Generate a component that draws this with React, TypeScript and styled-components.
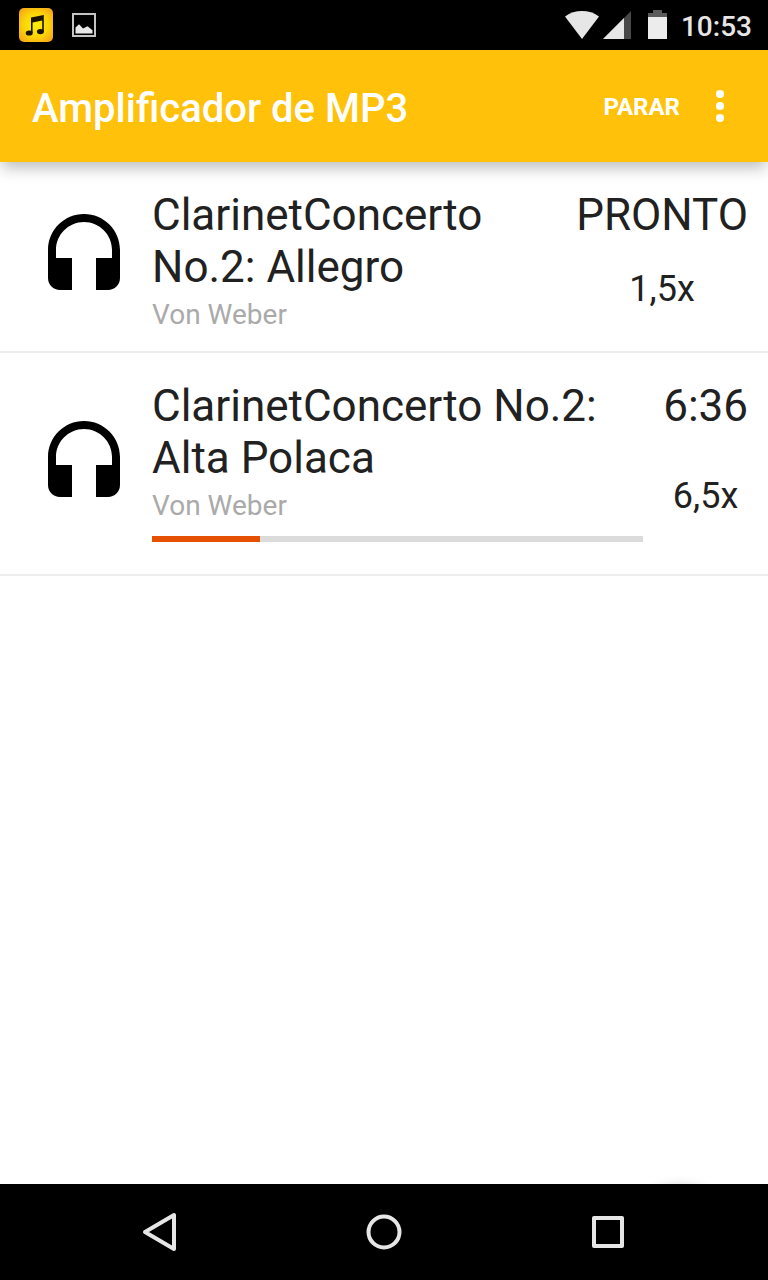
import React from 'react';
import styled, { createGlobalStyle } from 'styled-components';

const GlobalStyle = createGlobalStyle`
  *, *::before, *::after { box-sizing: border-box; }
  body {
    margin: 0;
    background: #fff;
    color: #212121;
    font-family: Roboto, "Liberation Sans", sans-serif;
  }
  h1, h2, p, ul { margin: 0; padding: 0; font-weight: 400; }
  button { border: 0; padding: 0; background: none; color: inherit; font: inherit; cursor: pointer; }
  svg { display: block; }
`;

const Screen = styled.div`
  display: flex;
  flex-direction: column;
  min-height: 100vh;
`;

const StatusBar = styled.div`
  display: flex;
  align-items: center;
  justify-content: space-between;
  height: 50px;
  padding: 0 16px 0 19px;
  background: #000;
  color: #e6e6e6;
`;

const StatusGroup = styled.div<{ $gap: number }>`
  display: flex;
  align-items: center;
  gap: ${(p) => p.$gap}px;
`;

const Clock = styled.time`
  padding-top: 4px;
  font-size: 28px;
  line-height: 32px;
  font-weight: 500;
`;

const AppBar = styled.header`
  position: relative;
  z-index: 1;
  display: flex;
  align-items: center;
  height: 112px;
  padding: 0 28px 0 32px;
  background: #ffc10a;
  color: #fff;
  box-shadow: 0 8px 14px -2px rgba(0, 0, 0, 0.26);
`;

const AppTitle = styled.h1`
  flex: 1;
  padding-top: 6px;
  font-size: 40px;
  line-height: 48px;
  font-weight: 500;
`;

const ActionButton = styled.button`
  padding-top: 2px;
  font-size: 24px;
  line-height: 48px;
  font-weight: 700;
`;

const MenuButton = styled.button`
  margin-left: 20px;
`;

const Content = styled.main`
  position: relative;
  flex: 1;
  overflow: hidden;
`;

const TrackList = styled.ul`
  list-style: none;
`;

const TrackRow = styled.li`
  display: flex;
  padding: 27px 20px 16px 36px;
  border-bottom: 2px solid #eee;
`;

const TrackIcon = styled.div`
  display: flex;
  align-items: center;
  margin-right: 20px;
  padding-bottom: 9px;
`;

const TrackInfo = styled.div`
  flex: 1;
  min-width: 0;
  margin-right: 20px;
  padding-bottom: 4px;
`;

const TrackTitle = styled.h2`
  font-size: 44px;
  line-height: 52px;
`;

const Artist = styled.p`
  margin-top: 6px;
  color: #aaa;
  font-size: 28px;
  line-height: 32px;
`;

const Progress = styled.progress`
  display: block;
  width: 100%;
  height: 6px;
  margin: 14px 0 12px;
  border: 0;
  appearance: none;
  background: #dbdbdb;
  &::-webkit-progress-bar { background: #dbdbdb; }
  &::-webkit-progress-value { background: #e65100; }
`;

const TrackStatus = styled.div`
  display: flex;
  flex-direction: column;
  align-items: center;
  font-size: 44px;
  line-height: 52px;
`;

const Gain = styled.div`
  display: flex;
  flex: 1;
  align-items: center;
  padding-top: 2px;
  font-size: 36px;
  line-height: 42px;
`;

const FloatingButton = styled.button`
  position: absolute;
  right: 32px;
  top: 100%;
  width: 112px;
  height: 112px;
  border-radius: 50%;
  box-shadow: 0 2px 12px rgba(0, 0, 0, 0.2);
`;

const NavBar = styled.nav`
  display: flex;
  height: 96px;
  padding: 0 48px;
  background: #000;
`;

const NavButton = styled.button`
  display: flex;
  flex: 1;
  align-items: center;
  justify-content: center;
`;

const MusicAppIcon = () => (
  <svg width="34" height="34" viewBox="0 0 34 34" aria-hidden="true">
    <defs>
      <radialGradient id="sun" r="0.7">
        <stop offset="0" stopColor="#fff000" />
        <stop offset="0.5" stopColor="#fbd606" />
        <stop offset="1" stopColor="#f59a1c" />
      </radialGradient>
    </defs>
    <rect width="34" height="34" rx="5" fill="url(#sun)" />
    <path d="M12 9.4 24.8 7v17h-1.6V12.4l-9.6 2V25H12z" fill="#1a1300" />
    <ellipse cx="10.2" cy="25" rx="3.5" ry="2.6" fill="#1a1300" />
    <ellipse cx="21.4" cy="23.6" rx="3.5" ry="2.6" fill="#1a1300" />
  </svg>
);

const PictureIcon = () => (
  <svg width="24" height="24" viewBox="0 0 24 24" aria-hidden="true">
    <rect x="1" y="1" width="22" height="22" fill="none" stroke="#c4c4c4" strokeWidth="2" />
    <path d="M3.5 20.5v-6L7 11.2l4 4.3 4.5-2.2 5 4v3.2z" fill="#e8e8e8" />
  </svg>
);

const WifiIcon = () => (
  <svg width="34" height="28" viewBox="0 0 34 28" aria-hidden="true">
    <path d="M0 5.5C10 -1.8 24 -1.8 34 5.5L17 28z" fill="#e6e6e6" />
  </svg>
);

const SignalIcon = () => (
  <svg width="28" height="28" viewBox="0 0 28 28" aria-hidden="true">
    <path d="M0 28 28 0v28z" fill="#484848" />
    <path d="M0 28 21 7v21z" fill="#e6e6e6" />
  </svg>
);

const BatteryIcon = () => (
  <svg width="19" height="30" viewBox="0 0 19 30" aria-hidden="true">
    <path d="M5 0h9v3h5v4H0V3h5z" fill="#5a5a5a" />
    <path d="M0 7h19v22H0z" fill="#ececec" />
  </svg>
);

const MoreIcon = () => (
  <svg width="40" height="48" viewBox="0 0 40 48" fill="#fff" aria-hidden="true">
    <circle cx="20" cy="12" r="4" />
    <circle cx="20" cy="24" r="4" />
    <circle cx="20" cy="36" r="4" />
  </svg>
);

const HeadsetIcon = () => (
  <svg width="96" height="96" viewBox="0 0 24 24" aria-hidden="true">
    <path d="M12 1c-4.97 0-9 4.03-9 9v7c0 1.66 1.34 3 3 3h3v-8H5v-2c0-3.87 3.13-7 7-7s7 3.13 7 7v2h-4v8h3c1.66 0 3-1.34 3-3v-7c0-4.97-4.03-9-9-9z" />
  </svg>
);

const navIcon = {
  width: 48,
  height: 48,
  viewBox: '0 0 48 48',
  fill: 'none',
  stroke: '#e6e6e6',
  strokeWidth: 4,
  strokeLinejoin: 'round' as const,
  'aria-hidden': true,
};

interface Track {
  title: string;
  artist: string;
  status: string;
  gain: string;
  progress?: number;
}

const tracks: Track[] = [
  { title: 'ClarinetConcerto No.2: Allegro', artist: 'Von Weber', status: 'PRONTO', gain: '1,5x' },
  { title: 'ClarinetConcerto No.2: Alta Polaca', artist: 'Von Weber', status: '6:36', gain: '6,5x', progress: 22 },
];

export default function App() {
  return (
    <Screen>
      <GlobalStyle />
      <StatusBar>
        <StatusGroup $gap={19}>
          <MusicAppIcon />
          <PictureIcon />
        </StatusGroup>
        <StatusGroup $gap={17}>
          <StatusGroup $gap={4}>
            <WifiIcon />
            <SignalIcon />
          </StatusGroup>
          <StatusGroup $gap={14}>
            <BatteryIcon />
            <Clock>10:53</Clock>
          </StatusGroup>
        </StatusGroup>
      </StatusBar>
      <AppBar>
        <AppTitle>Amplificador de MP3</AppTitle>
        <ActionButton type="button">PARAR</ActionButton>
        <MenuButton type="button" aria-label="Mais opções">
          <MoreIcon />
        </MenuButton>
      </AppBar>
      <Content>
        <TrackList>
          {tracks.map((track) => (
            <TrackRow key={track.title}>
              <TrackIcon>
                <HeadsetIcon />
              </TrackIcon>
              <TrackInfo>
                <TrackTitle>{track.title}</TrackTitle>
                <Artist>{track.artist}</Artist>
                {track.progress !== undefined && (
                  <Progress value={track.progress} max={100} aria-label={track.title} />
                )}
              </TrackInfo>
              <TrackStatus>
                <span>{track.status}</span>
                <Gain>{track.gain}</Gain>
              </TrackStatus>
            </TrackRow>
          ))}
        </TrackList>
        <FloatingButton type="button" aria-label="Adicionar" />
      </Content>
      <NavBar>
        <NavButton type="button" aria-label="Voltar">
          <svg {...navIcon}>
            <path d="M9 24 38 7v34z" />
          </svg>
        </NavButton>
        <NavButton type="button" aria-label="Início">
          <svg {...navIcon}>
            <circle cx="24" cy="24" r="15.5" />
          </svg>
        </NavButton>
        <NavButton type="button" aria-label="Recentes">
          <svg {...navIcon}>
            <rect x="10" y="10" width="28" height="28" />
          </svg>
        </NavButton>
      </NavBar>
    </Screen>
  );
}
